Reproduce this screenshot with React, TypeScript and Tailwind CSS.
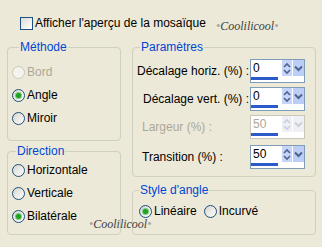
// Boîte de dialogue "Mosaïque" — style Windows XP
type RadioProps = { label: string; checked?: boolean; disabled?: boolean };

function Radio({ label, checked, disabled }: RadioProps) {
  return (
    <div className="flex items-center gap-[2px] h-[16px] leading-[16px]">
      <span
        className={
          disabled
            ? 'w-[13px] h-[13px] rounded-full border border-[#CAC8BB] bg-[#F4F3EE] flex items-center justify-center'
            : 'w-[13px] h-[13px] rounded-full border border-[#1C5180] bg-linear-to-br from-[#D6D5CE] to-white flex items-center justify-center'
        }
      >
        {checked && <span className="w-[5px] h-[5px] rounded-full bg-[#21A121] ring-1 ring-[#7ACB7A]" />}
      </span>
      <span className={disabled ? 'text-[#ACA899]' : 'text-black'}>{label}</span>
    </div>
  );
}

function Spin({ value, disabled }: { value: string; disabled?: boolean }) {
  const arrow = disabled ? '#C9CFDC' : '#4D6492';
  return (
    <div
      className={
        disabled
          ? 'w-[55px] h-[24px] border border-[#C9C7BA] bg-white flex'
          : 'w-[55px] h-[24px] border border-[#7F9DB9] bg-white flex'
      }
    >
      <div className="w-[31px] flex flex-col justify-between">
        <span className={disabled ? 'pl-[2px] pt-[1px] leading-[14px] text-[#ACA899]' : 'pl-[2px] pt-[1px] leading-[14px] text-black'}>
          {value}
        </span>
        <span className="h-[3px] w-[27px] mb-[2px] bg-[#2A5BC8]" />
      </div>
      <div className="flex gap-[1px] h-[16px]">
        <span className={disabled ? 'w-[10px] h-full bg-[#EEF0F6] flex items-center justify-center' : 'w-[10px] h-full bg-[#C6D5F9] flex items-center justify-center'}>
          <svg width="8" height="13" viewBox="0 0 8 13">
            <path d="M1 5 L4 2 L7 5" fill="none" stroke={arrow} strokeWidth="1.6" />
            <path d="M1 8 L4 11 L7 8" fill="none" stroke={arrow} strokeWidth="1.6" />
          </svg>
        </span>
        <span className={disabled ? 'w-[11px] h-full bg-[#EEF0F6] flex items-center justify-center' : 'w-[11px] h-full bg-[#BCCDF6] flex items-center justify-center'}>
          <svg width="9" height="7" viewBox="0 0 9 7">
            <path d="M1 1.5 L4.5 5 L8 1.5" fill="none" stroke={arrow} strokeWidth="2" />
          </svg>
        </span>
      </div>
    </div>
  );
}

export default function App() {
  const params = [
    { label: 'Décalage horiz. (%) :', value: '0', pad: 'pl-0' },
    { label: 'Décalage vert. (%) :', value: '0', pad: 'pl-[6px]' },
    { label: 'Largeur (%) :', value: '50', pad: 'pl-[5px]', disabled: true },
    { label: 'Transition (%) :', value: '50', pad: 'pl-[5px]' },
  ];

  return (
    <div className="relative w-[322px] h-[247px] overflow-hidden bg-[#ECE9D8] text-[12px] font-['Liberation_Sans',Arial,sans-serif]">
      <div className="flex items-center gap-[2px] pt-[16px] pl-[20px] leading-[14px]">
        <span className="w-[13px] h-[13px] border border-[#1C5180] bg-linear-to-br from-[#DCDBD4] to-white" />
        <span>Afficher l'aperçu de la mosaïque</span>
      </div>

      <div className="flex gap-[11px] pl-[7px] mt-[10px]">
        <div className="w-[114px] flex flex-col gap-[3px]">
          <fieldset className="h-[101px] border border-[#D0D0BF] rounded-[4px] pl-[4px]">
            <legend className="ml-[7px] px-[1px] leading-[14px] text-[#0046D5]">Méthode</legend>
            <div className="flex flex-col gap-[7px] mt-[10px]">
              <Radio label="Bord" disabled />
              <Radio label="Angle" checked />
              <Radio label="Miroir" />
            </div>
          </fieldset>
          <fieldset className="h-[91px] border border-[#D0D0BF] rounded-[4px] pl-[4px]">
            <legend className="ml-[4px] px-[1px] leading-[14px] text-[#0046D5]">Direction</legend>
            <div className="flex flex-col gap-[7px] mt-[4px]">
              <Radio label="Horizontale" />
              <Radio label="Verticale" />
              <Radio label="Bilatérale" checked />
            </div>
          </fieldset>
        </div>

        <div className="w-[184px] flex flex-col gap-[6px]">
          <fieldset className="h-[137px] border border-[#D0D0BF] rounded-[4px] pl-[4px]">
            <legend className="ml-[3px] px-[1px] leading-[14px] text-[#0046D5]">Paramètres</legend>
            <div className="flex flex-col gap-[4px] mt-[5px]">
              {params.map((p, i) => (
                <div key={i} className={i === 3 ? 'flex items-center mt-[2px]' : 'flex items-center'}>
                  <span className={`w-[113px] ${p.pad} ${p.disabled ? 'text-[#ACA899]' : 'text-black'}`}>{p.label}</span>
                  <Spin value={p.value} disabled={p.disabled} />
                </div>
              ))}
            </div>
          </fieldset>
          <fieldset className="h-[52px] border border-[#D0D0BF] rounded-[4px] pl-[6px]">
            <legend className="ml-0 px-[1px] leading-[14px] text-[#0046D5]">Style d'angle</legend>
            <div className="flex items-center gap-[7px] mt-[6px]">
              <Radio label="Linéaire" checked />
              <Radio label="Incurvé" />
            </div>
          </fieldset>
        </div>
      </div>

      <span className="absolute left-[216px] top-[17px] text-[12px] italic text-[#3F3F3F] font-['Liberation_Serif',serif]">
        <span className="text-[#A5A5A5]">•</span>Coolilicool<span className="text-[#A5A5A5]">•</span>
      </span>
      <span className="absolute left-[89px] top-[215px] text-[12px] italic text-[#3F3F3F] font-['Liberation_Serif',serif]">
        <span className="text-[#A5A5A5]">•</span>Coolilicool<span className="text-[#A5A5A5]">•</span>
      </span>
    </div>
  );
}
